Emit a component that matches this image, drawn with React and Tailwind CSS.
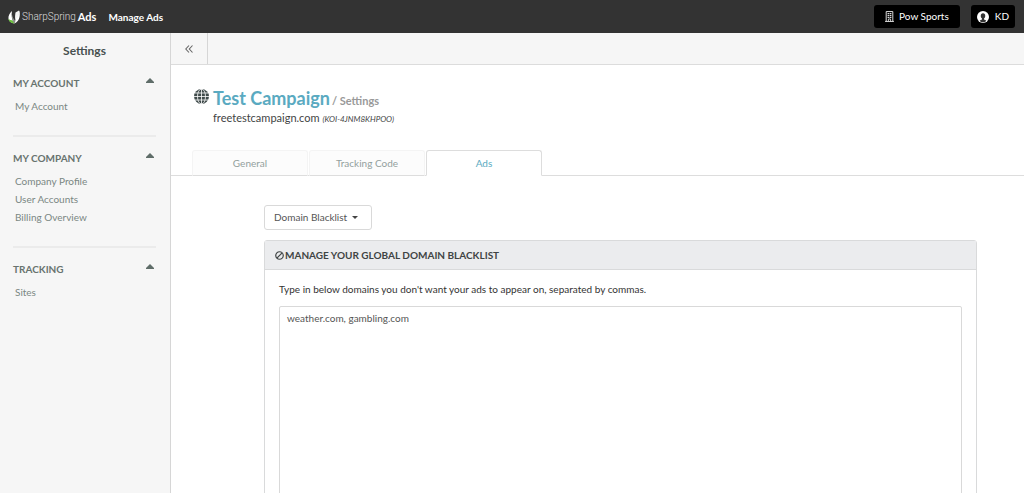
import React, { useState } from "react";

const sections = [
  { title: "My Account", links: ["My Account"] },
  { title: "My Company", links: ["Company Profile", "User Accounts", "Billing Overview"] },
  { title: "Tracking", links: ["Sites"] },
];

const tabs = ["General", "Tracking Code", "Ads"];

function LogoMark() {
  return (
    <svg viewBox="0 0 24 28" className="h-[14px] w-3" aria-hidden="true">
      <path d="M8 2C3 6 0 12 1 18c1 5 6 8 12 9C8 20 6 11 8 2z" fill="#fff" />
      <path d="M1 17c0 6 5 9 12 10-1-3-3-5-5-7-2 1-5 0-7-3z" fill="#6cbf3f" />
      <path d="M8 9c-1 7 1 13 5 18 1-2 1-4 1-6-3-3-5-7-6-12z" fill="#8d918d" />
      <path d="M22 1c2 3 2 8 1 13-1 6-4 10-10 13 3-6 1-11 2-16 1 2 1 3 2 4 3-4 5-9 5-14z" fill="#fff" />
      <path d="M15 5c-1 5-1 9 0 13l5-4c2-4 3-9 2-13z" fill="#f4f4f4" />
    </svg>
  );
}

function BuildingIcon() {
  return (
    <svg viewBox="0 0 16 20" className="h-[11px] w-[9px]" fill="none" stroke="#ddd" aria-hidden="true">
      <path d="M2 19V1h12v18M0 19h16" strokeWidth="1.800" />
      <path d="M4.500 4.500h3M8.500 4.500h3M4.500 8h3M8.500 8h3M4.500 11.500h3M8.500 11.500h3" strokeWidth="2" />
      <path d="M6 19v-4.500h4V19" strokeWidth="1.600" />
    </svg>
  );
}

function UserIcon() {
  return (
    <svg viewBox="0 0 24 24" className="h-3 w-3" aria-hidden="true">
      <circle cx="12" cy="12" r="12" fill="#fff" />
      <path
        d="M12 4.500c-3 0-4.500 2-4.500 5 0 2.500 1 4.500 2.500 5.500v2c-2 .8-3.500 1.200-4.500 2.300C7 21.500 9 22.500 12 22.500s5-1 6.500-3.200c-1-1.100-2.500-1.500-4.500-2.300v-2c1.500-1 2.500-3 2.500-5.500 0-3-1.500-5-4.500-5z"
        fill="#333"
      />
    </svg>
  );
}

function GlobeIcon() {
  return (
    <svg viewBox="0 0 30 30" className="h-[15px] w-[15px]" aria-hidden="true">
      <circle cx="15" cy="15" r="15" fill="#3f4a4a" />
      <g fill="none" stroke="#fff" strokeWidth="1.600">
        <path d="M15 0v30M0 15h30M2 8h26M2 22h26" />
        <ellipse cx="15" cy="15" rx="8" ry="15" />
      </g>
    </svg>
  );
}

function BanIcon() {
  return (
    <svg viewBox="0 0 18 18" className="h-[9px] w-[9px]" fill="none" stroke="#3f4444" strokeWidth="2.400" aria-hidden="true">
      <circle cx="9" cy="9" r="7.500" />
      <path d="M3.700 14.300L14.300 3.700" />
    </svg>
  );
}

function SidebarSection({ title, links }) {
  const [open, setOpen] = useState(true);

  return (
    <section className="border-b-2 border-[#ebebeb] pb-5 last:border-0">
      <button
        type="button"
        aria-expanded={open}
        onClick={() => setOpen(!open)}
        className="flex w-full items-start justify-between pr-[2px] text-[10px] leading-4 font-bold text-[#68736f] uppercase"
      >
        {title}
        <svg viewBox="0 0 8 5" className="mt-[3px] h-[5px] w-2" fill="#5f6d69" aria-hidden="true">
          <path d="M4 0l4 4v1H0V4z" />
        </svg>
      </button>
      {open && (
        <ul className="mt-[6px] ml-[2px]">
          {links.map((link) => (
            <li key={link} className="text-[10px] leading-[18px] text-[#7a8783]">
              <a href="#">{link}</a>
            </li>
          ))}
        </ul>
      )}
    </section>
  );
}

export default function App() {
  const [activeTab, setActiveTab] = useState("Ads");
  const [domains, setDomains] = useState("weather.com, gambling.com");

  return (
    <div className="flex h-screen flex-col overflow-hidden bg-white font-['Lato',sans-serif] text-[#444]">
      <header className="flex h-[33px] shrink-0 items-center bg-[#333] pr-[9px] pl-2 text-white">
        <a href="#" className="flex items-center">
          <LogoMark />
          <span className="ml-[2px] font-['Roboto',sans-serif] text-[10px] leading-4 font-light text-[#ddd]">SharpSpring</span>
          <span className="ml-[2px] text-[11px] leading-4 font-bold">Ads</span>
        </a>
        <a href="#" className="ml-3 text-[10px] leading-4 font-bold">Manage Ads</a>
        <div className="ml-auto flex gap-[11px] text-[10px]">
          <button type="button" className="flex h-[23px] items-center gap-[5px] rounded-[3px] bg-black px-[11px]">
            <BuildingIcon />
            Pow Sports
          </button>
          <button type="button" className="flex h-[23px] items-center gap-[6px] rounded-[3px] bg-black px-[6px]">
            <UserIcon />
            KD
          </button>
        </div>
      </header>

      <div className="flex min-h-0 flex-1">
        <aside className="w-[171px] shrink-0 border-r border-[#d6d6d6] bg-[#f6f6f6] pr-[14px] pl-[13px]">
          <h2 className="pt-[10px] text-center text-[12px] leading-4 font-bold text-[#47504f]">Settings</h2>
          <nav className="mt-4 flex flex-col gap-[13px]">
            {sections.map((section) => (
              <SidebarSection key={section.title} {...section} />
            ))}
          </nav>
        </aside>

        <main className="min-w-0 flex-1 overflow-y-auto [scrollbar-width:none]">
          <div className="flex h-8 border-b border-[#dcdcdc] bg-[#f6f6f6]">
            <button
              type="button"
              aria-label="Collapse sidebar"
              className="flex w-[37px] items-center justify-center border-r border-[#d6d6d6]"
            >
              <svg viewBox="0 0 8 8" className="h-2 w-2" fill="none" stroke="#666" strokeWidth="1.100" aria-hidden="true">
                <path d="M4 .5L.800 4 4 7.500M7.500 .5L4.300 4l3.200 3.500" />
              </svg>
            </button>
          </div>

          <div className="flex gap-1 pt-[22px] pl-[23px]">
            <div className="pt-[2px]">
              <GlobeIcon />
            </div>
            <div>
              <h1 className="flex items-baseline gap-[2px] text-[18px] leading-[22px] font-bold text-[#5aaac1]">
                Test Campaign
                <small className="text-[11px] leading-4 text-[#999]">/ Settings</small>
              </h1>
              <p className="text-[11px] leading-[18px] text-[#3f4444]">
                freetestcampaign.com <em className="text-[8px] leading-none">(KOI-4JNM8KHPOO)</em>
              </p>
            </div>
          </div>

          <div role="tablist" className="mt-[23px] flex gap-px border-b border-[#ddd] pl-[21px]">
            {tabs.map((tab) => (
              <button
                key={tab}
                type="button"
                role="tab"
                aria-selected={activeTab === tab}
                onClick={() => setActiveTab(tab)}
                className={`-mb-px h-[26px] w-[116px] rounded-t-[3px] border text-[10px] ${
                  activeTab === tab
                    ? "border-[#ddd] border-b-white bg-white text-[#5aaac1]"
                    : "border-[#f4f4f4] border-b-[#ddd] bg-[#fcfcfc] text-[#93a09c]"
                }`}
              >
                {tab}
              </button>
            ))}
          </div>

          <div className="pt-[29px] pr-[47px] pb-6 pl-[93px]">
            <div className="relative flex w-[108px]">
              <select
                aria-label="Settings section"
                className="h-[25px] w-full appearance-none rounded-[3px] border border-[#d9d9d9] bg-white pl-[9px] text-[10px] text-[#555]"
              >
                <option>Domain Blacklist</option>
              </select>
              <svg viewBox="0 0 6 3" className="pointer-events-none absolute top-[11px] right-[14px] h-[3px] w-[6px]" fill="#444" aria-hidden="true">
                <path d="M0 0h6L3 3z" />
              </svg>
            </div>

            <section className="mt-[10px] rounded-[3px] border border-[#d9dadb]">
              <h2 className="flex h-[29px] items-center gap-px border-b border-[#d9dadb] bg-[#ebecee] pl-[10px] text-[10px] font-bold text-[#3f4444] uppercase">
                <BanIcon />
                Manage your global domain blacklist
              </h2>
              <div className="px-[14px] pt-[11px] pb-4">
                <label htmlFor="domains" className="block text-[10px] leading-4 text-[#333]">
                  Type in below domains you don't want your ads to appear on, separated by commas.
                </label>
                <textarea
                  id="domains"
                  value={domains}
                  onChange={(e) => setDomains(e.target.value)}
                  className="mt-[9px] block h-60 w-full resize-none rounded-[2px] border border-[#d9d9d9] px-[7px] py-[3px] text-[10px] leading-4 text-[#555]"
                />
              </div>
            </section>
          </div>
        </main>
      </div>
    </div>
  );
}
